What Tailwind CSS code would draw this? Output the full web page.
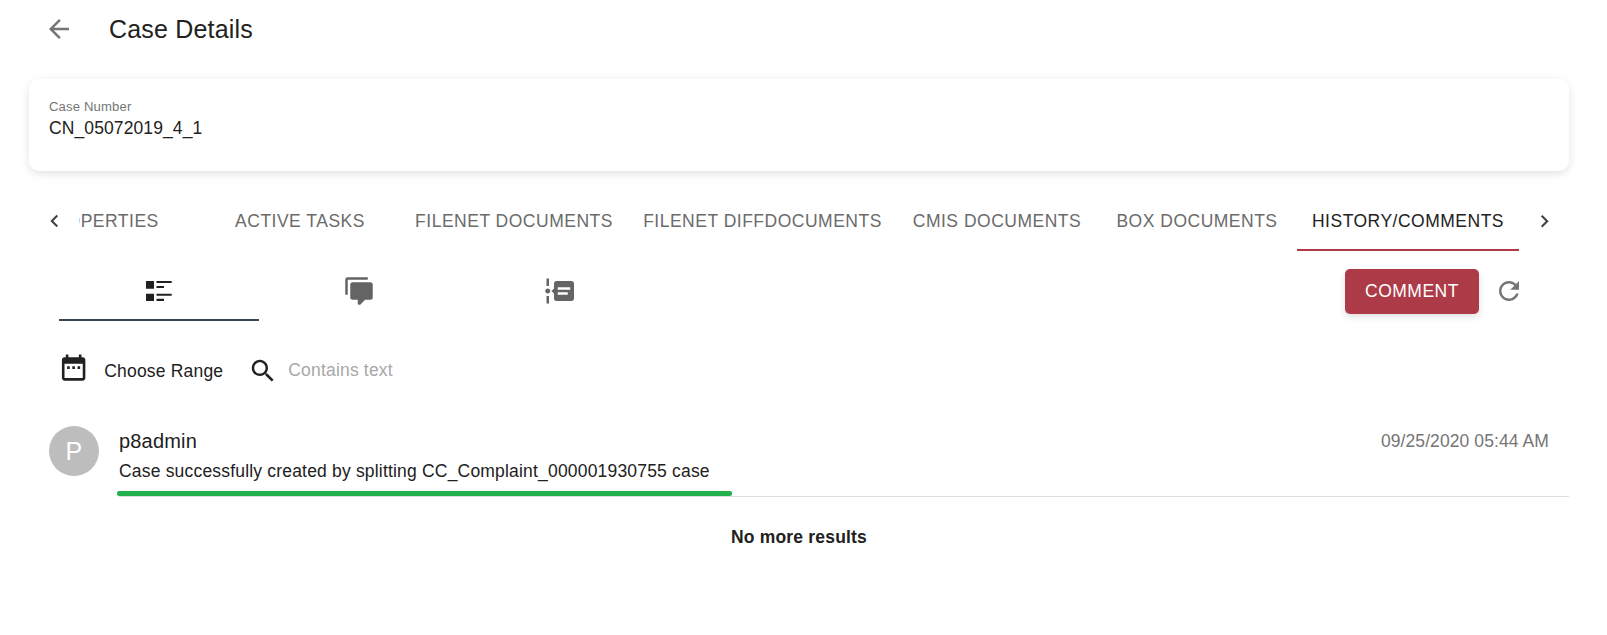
<!DOCTYPE html>
<html lang="en">
<head>
<meta charset="utf-8">
<title>Case Details</title>
<script src="https://cdn.jsdelivr.net/npm/@tailwindcss/browser@4"></script>
</head>
<body class="h-[635px] overflow-hidden bg-white font-['Liberation_Sans',Arial,sans-serif] text-[17.5px] leading-[26px] tracking-[0.01071em] text-[#212121]">
<header class="flex h-[79px] items-start pt-[14px] pl-[44px]">
  <svg class="size-[30px] fill-[#757575]" viewBox="0 0 24 24"><path d="M20 11H7.83l5.59-5.59L12 4l-8 8 8 8 1.41-1.41L7.83 13H20v-2z"/></svg>
  <h1 class="ml-[35px] text-[25px] leading-[30px] tracking-[0.0075em]">Case Details</h1>
</header>

<main class="ml-[29px] w-[1540px]">
  <section class="h-[92px] rounded-[10px] bg-white pt-[19px] pl-5 shadow-[0_3px_9px_rgba(0,0,0,0.1),0_0_14px_rgba(0,0,0,0.02)]">
    <p class="text-[13.125px] leading-[18px] tracking-[0.011em] text-[#757575]">Case Number</p>
    <p class="leading-[24px] tracking-[0.006em]">CN_05072019_4_1</p>
  </section>

  <nav class="mt-[20px] flex h-[60px] items-stretch">
    <button class="w-[50px] shrink-0 pl-[13px]"><svg class="size-[25px] fill-[#424242]" viewBox="0 0 24 24"><path d="M15.41 16.09l-4.58-4.59 4.58-4.59L14 5.5l-6 6 6 6z"/></svg></button>
    <div class="flex w-[1440px] shrink-0 overflow-hidden tracking-[0.02857em] text-[#6b6b6b]">
      <div class="-ml-[79px] flex w-[200px] shrink-0 items-center justify-center">PROPERTIES</div>
      <div class="flex w-[200px] shrink-0 items-center justify-center">ACTIVE TASKS</div>
      <div class="flex w-[228px] shrink-0 items-center justify-center">FILENET DOCUMENTS</div>
      <div class="flex w-[269px] shrink-0 items-center justify-center">FILENET DIFFDOCUMENTS</div>
      <div class="flex w-[200px] shrink-0 items-center justify-center">CMIS DOCUMENTS</div>
      <div class="flex w-[200px] shrink-0 items-center justify-center">BOX DOCUMENTS</div>
      <div class="flex w-[222px] shrink-0 items-center justify-center border-b-2 border-[#ad3a47] pt-[2px] text-[#212121]">HISTORY/COMMENTS</div>
    </div>
    <button class="w-[50px] shrink-0 pl-[13px]"><svg class="size-[25px] fill-[#424242]" viewBox="0 0 24 24"><path d="M8.59 16.34l4.58-4.59-4.58-4.59L10 5.75l6 6-6 6z"/></svg></button>
  </nav>

  <div class="flex h-[70px] pl-[30px]">
    <div class="flex w-[200px] justify-center border-b-2 border-[#37474f] pt-[25px]">
      <svg class="size-[30px] fill-[#212121]" viewBox="0 0 30 30"><path d="M2 5h8v7.700H2zM2 17.700h8v7.300H2zM12.500 5h15.200v2h-15.200zM12.500 10h7.500v2h-7.500zM12.500 17.700h15.200v2h-15.200zM12.500 22.700h7.500v2.300h-7.500z"/></svg>
    </div>
    <div class="flex w-[200px] justify-center pt-[25px]">
      <svg class="size-[30px] fill-[#646464]" viewBox="0 0 24 24"><path d="M12,23A1,1 0 0,1 11,22V19H7A2,2 0 0,1 5,17V7A2,2 0 0,1 7,5H21A2,2 0 0,1 23,7V17A2,2 0 0,1 21,19H16.9L13.2,22.71C13,22.89 12.76,23 12.5,23H12M3,15H1V3A2,2 0 0,1 3,1H19V3H3V15Z"/></svg>
    </div>
    <div class="flex w-[200px] justify-center pt-[25px]">
      <svg class="size-[30px] fill-[#646464]" viewBox="0 0 24 24"><path d="M4,2V8H2V2H4M2,22V16H4V22H2M5,12C5,13.11 4.11,14 3,14C1.89,14 1,13.11 1,12C1,10.89 1.89,10 3,10C4.11,10 5,10.89 5,12M24,6V18C24,19.11 23.11,20 22,20H10C8.89,20 8,19.11 8,18V14L6,12L8,10V6C8,4.89 8.89,4 10,4H22C23.11,4 24,4.89 24,6M19,13H11V15H19V13M21,9H11V11H21V9Z"/></svg>
    </div>
    <button class="mt-[18px] ml-auto h-[45px] w-[134px] rounded-[5px] bg-[#ad3a47] pb-[2px] tracking-[0.02857em] text-white shadow-[0_3px_7px_rgba(0,0,0,0.12)]">COMMENT</button>
    <svg class="mt-[25px] mr-[45px] ml-[15px] size-[30px] fill-[#757575]" viewBox="0 0 24 24"><path d="M17.650 6.350C16.200 4.900 14.210 4 12 4c-4.420 0-7.990 3.580-7.990 8s3.570 8 7.990 8c3.730 0 6.840-2.550 7.730-6h-2.080c-.820 2.330-3.040 4-5.650 4-3.310 0-6-2.690-6-6s2.690-6 6-6c1.660 0 3.140.690 4.220 1.780L13 11h7V4l-2.350 2.350z"/></svg>
  </div>

  <div class="flex h-[105px] items-start pt-[31px] pl-[29px]">
    <svg class="h-[31.25px] w-[31.25px] fill-[#212121]" viewBox="0 0 24 24"><path d="M9 11H7v2h2v-2zm4 0h-2v2h2v-2zm4 0h-2v2h2v-2zm2-7h-1V2h-2v2H8V2H6v2H5c-1.110 0-1.990.9-1.990 2L3 20c0 1.100.890 2 2 2h14c1.100 0 2-.9 2-2V6c0-1.100-.9-2-2-2zm0 16H5V9h14v11z"/></svg>
    <span class="mt-[6px] ml-[15px] w-[144px]">Choose Range</span>
    <svg class="mt-[4px] size-[30px] fill-[#212121]" viewBox="0 0 24 24"><path d="M15.500 14h-.790l-.280-.270C15.410 12.590 16 11.110 16 9.500 16 5.910 13.090 3 9.500 3S3 5.910 3 9.500 5.910 16 9.500 16c1.610 0 3.090-.590 4.230-1.570l.270.280v.790l5 4.990L20.490 19l-4.990-5zm-6 0C7.010 14 5 11.990 5 9.500S7.010 5 9.500 5 14 7.010 14 9.500 11.990 14 9.500 14z"/></svg>
    <span class="mt-[5px] ml-[10px] text-[#a8a8a8]">Contains text</span>
  </div>

  <article class="relative flex h-[71px] pl-5">
    <div class="flex size-[50px] shrink-0 items-center justify-center rounded-full bg-[#bdbdbd] text-[25px] text-white">P</div>
    <div class="ml-5 flex grow justify-between border-b border-[#e0e0e0] pr-5">
      <div>
        <p class="mt-px text-[20px] leading-[28px] tracking-[0.00938em]">p8admin</p>
        <p class="mt-[3px]">Case successfully created by splitting CC_Complaint_000001930755 case</p>
      </div>
      <time class="mt-[2px] tracking-[0.005em] text-[#757575]">09/25/2020 05:44 AM</time>
    </div>
    <div class="absolute bottom-px left-[88px] h-[5px] w-[615px] rounded-[2px] bg-[#22b14c]"></div>
  </article>

  <p class="mt-[27px] text-center font-bold">No more results</p>
</main>
</body>
</html>
